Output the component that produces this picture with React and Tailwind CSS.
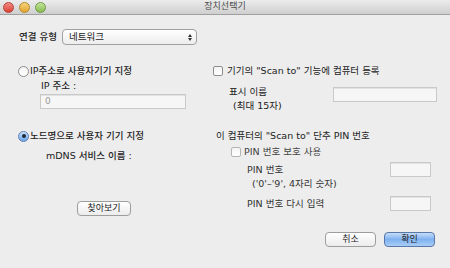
import React from 'react';

const font = { fontFamily: '"DejaVu Sans", "Noto Sans CJK KR", sans-serif' };

const Radio = ({ checked }) =>
  checked ? (
    <span className="w-[11px] h-[11px] rounded-full border border-[#5b7fb3] bg-gradient-to-b from-[#cfe2fa] to-[#6aa3ea] flex items-center justify-center shrink-0">
      <span className="w-[4px] h-[4px] rounded-full bg-[#1b2a3d]" />
    </span>
  ) : (
    <span className="w-[11px] h-[11px] rounded-full border border-[#8e8e8e] bg-gradient-to-b from-[#f4f4f4] to-white shrink-0" />
  );

const Check = ({ dim }) => (
  <span
    className={`w-[10px] h-[10px] rounded-[2px] border bg-gradient-to-b from-[#f4f4f4] to-white shrink-0 ${
      dim ? 'border-[#b5b5b5]' : 'border-[#8e8e8e]'
    }`}
  />
);

const Field = ({ className, children }) => (
  <div className={`bg-[#f6f6f6] border border-[#c9c9c9] shadow-[inset_0_1px_0_#e2e2e2] text-[9px] text-[#9a9a9a] pl-[4px] leading-[12px] ${className}`}>
    {children}
  </div>
);

const Button = ({ children, className, primary }) => (
  <div
    className={`h-[15px] rounded-[4px] border flex items-center justify-center text-[9px] leading-none text-[#222] ${
      primary
        ? 'border-[#5878aa] bg-gradient-to-b from-[#c4dcf8] via-[#7fb2f0] to-[#a9cdf7]'
        : 'border-[#9d9d9d] bg-gradient-to-b from-white to-[#ececec]'
    } ${className}`}
  >
    {children}
  </div>
);

export default function App() {
  return (
    <div className="w-[450px] h-[268px] bg-[#ededed] overflow-hidden text-[#222] text-[9.5px]" style={font}>
      {/* title bar */}
      <div className="h-[15px] bg-gradient-to-b from-[#ececec] to-[#cfcfcf] border-b border-[#9f9f9f] flex items-center relative">
        <div className="flex items-center gap-[5px] pl-[3px]">
          <span className="w-[11px] h-[11px] rounded-full border border-[#b5433b] bg-gradient-to-b from-[#f08a82] to-[#db3d33]" />
          <span className="w-[11px] h-[11px] rounded-full border border-[#b68a2a] bg-gradient-to-b from-[#f6d37a] to-[#e1a52b]" />
          <span className="w-[11px] h-[11px] rounded-full border border-[#6f9a45] bg-gradient-to-b from-[#c4e49a] to-[#86bd4f]" />
        </div>
        <div className="absolute inset-0 flex items-center justify-center text-[9px] text-[#4a4a4a]">장치선택기</div>
      </div>

      {/* connection type */}
      <div className="flex items-center h-[16px] mt-[14px] pl-[19px]">
        <span className="w-[43px] font-medium">연결 유형</span>
        <div className="w-[135px] h-[16px] rounded-[4px] border border-[#a0a0a0] bg-gradient-to-b from-white to-[#ededed] flex items-center justify-between pl-[6px] pr-[4px]">
          <span>네트워크</span>
          <span className="flex flex-col items-center gap-[1px]">
            <span className="w-0 h-0 border-l-[2px] border-r-[2px] border-b-[3px] border-l-transparent border-r-transparent border-b-[#333]" />
            <span className="w-0 h-0 border-l-[2px] border-r-[2px] border-t-[3px] border-l-transparent border-r-transparent border-t-[#333]" />
          </span>
        </div>
      </div>

      {/* row 1 */}
      <div className="flex mt-[20px]">
        <div className="w-[213px] pl-[18px] flex flex-col">
          <div className="flex items-center h-[12px] gap-[1px]">
            <Radio />
            <span className="font-medium">IP주소로 사용자기기 지정</span>
          </div>
          <div className="h-[12px] mt-[3px] pl-[23px] flex items-center font-medium">IP 주소 :</div>
          <Field className="w-[146px] h-[15px] mt-[2px] ml-[22px]">0</Field>
        </div>
        <div className="flex flex-col">
          <div className="flex items-center h-[12px] gap-[4px]">
            <Check />
            <span>기기의 "Scan to" 기능에 컴퓨터 등록</span>
          </div>
          <div className="flex mt-[8px]">
            <div className="w-[120px] pl-[16px] leading-[14px]">
              <div>표시 이름</div>
              <div className="pl-[4px]">(최대 15자)</div>
            </div>
            <Field className="w-[104px] h-[15px] mt-[2px]" />
          </div>
        </div>
      </div>

      {/* row 2 */}
      <div className="flex mt-[17px]">
        <div className="w-[216px] pl-[18px] flex flex-col">
          <div className="flex items-center h-[12px] gap-[1px]">
            <Radio checked />
            <span className="font-medium">노드명으로 사용자 기기 지정</span>
          </div>
          <div className="h-[12px] mt-[8px] pl-[28px] flex items-center font-medium">mDNS 서비스 이름 :</div>
          <Button className="w-[54px] mt-[39px] ml-[59px]">찾아보기</Button>
        </div>
        <div className="flex flex-col">
          <div className="h-[12px] flex items-center">이 컴퓨터의 "Scan to" 단추 PIN 번호</div>
          <div className="flex items-center h-[12px] gap-[3px] mt-[4px] pl-[15px]">
            <Check dim />
            <span className="text-[#444]">PIN 번호 보호 사용</span>
          </div>
          <div className="flex mt-[5px] pl-[31px]">
            <div className="w-[143px] leading-[14px] text-[#333]">
              <div>PIN 번호</div>
              <div className="pl-[5px]">('0'–'9', 4자리 숫자)</div>
            </div>
            <Field className="w-[41px] h-[15px] mt-[-1px]" />
          </div>
          <div className="flex items-center mt-[5px] pl-[31px]">
            <div className="w-[143px] leading-[14px] text-[#333]">PIN 번호 다시 입력</div>
            <Field className="w-[41px] h-[15px]" />
          </div>
        </div>
      </div>

      {/* buttons */}
      <div className="flex justify-end gap-[8px] pr-[15px] mt-[16px]">
        <Button className="w-[51px]">취소</Button>
        <Button primary className="w-[51px]">확인</Button>
      </div>
    </div>
  );
}
